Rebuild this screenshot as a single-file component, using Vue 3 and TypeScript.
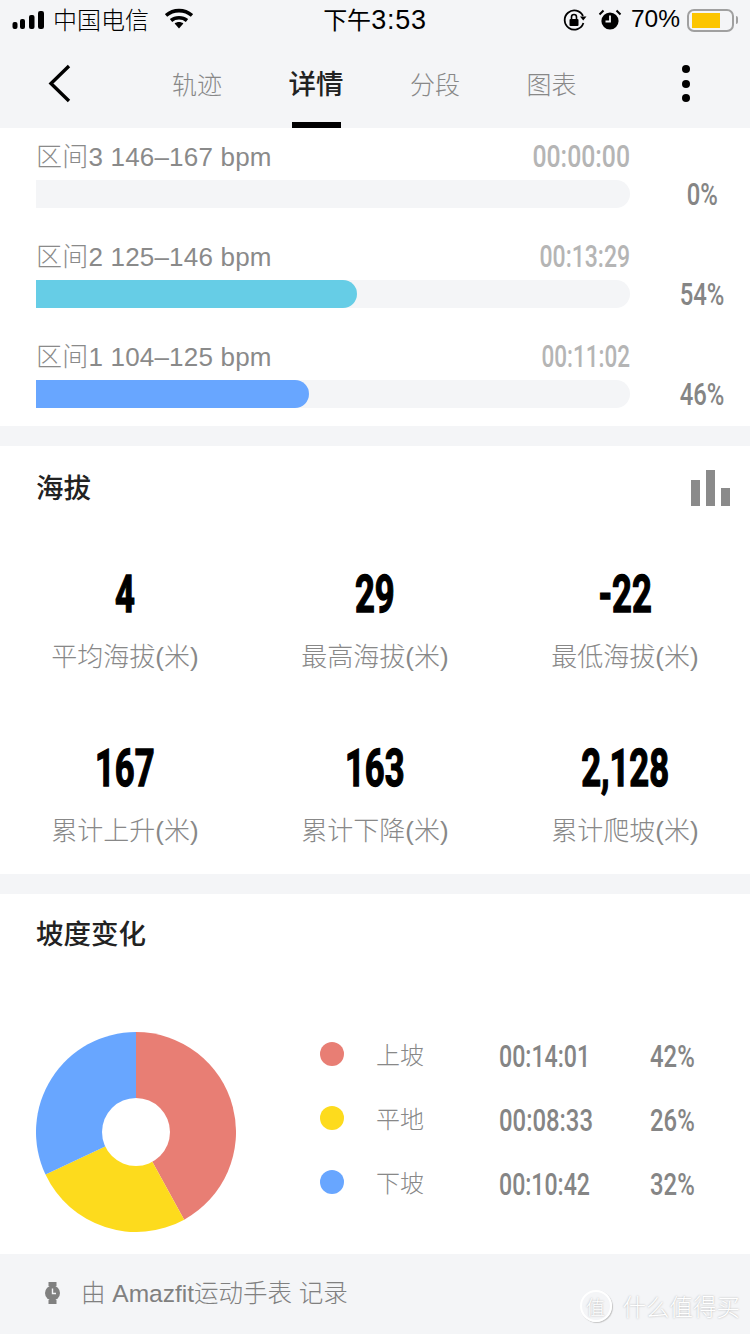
<script setup lang="ts">
const tabs = [
  { name: '轨迹', active: false },
  { name: '详情', active: true },
  { name: '分段', active: false },
  { name: '图表', active: false },
]
const zones = [
  { label: '区间3 146–167 bpm', time: '00:00:00', pct: 0, color: 'transparent', scale: 0.8 },
  { label: '区间2 125–146 bpm', time: '00:13:29', pct: 54, color: '#66cde6', scale: 0.742 },
  { label: '区间1 104–125 bpm', time: '00:11:02', pct: 46, color: '#68a6ff', scale: 0.726 },
]
const stats = [
  { value: '4', label: '平均海拔(米)' },
  { value: '29', label: '最高海拔(米)' },
  { value: '-22', label: '最低海拔(米)' },
  { value: '167', label: '累计上升(米)' },
  { value: '163', label: '累计下降(米)' },
  { value: '2,128', label: '累计爬坡(米)' },
]
const slopes = [
  { label: '上坡', time: '00:14:01', pct: 42, color: '#e87e74', scale: 0.747 },
  { label: '平地', time: '00:08:33', pct: 26, color: '#fddb1d', scale: 0.77 },
  { label: '下坡', time: '00:10:42', pct: 32, color: '#68a6ff', scale: 0.745 },
]
function slicePath(startPct: number, pct: number): string {
  const a0 = (startPct / 100) * Math.PI * 2
  const a1 = ((startPct + pct) / 100) * Math.PI * 2
  const x0 = 100 + 100 * Math.sin(a0)
  const y0 = 100 - 100 * Math.cos(a0)
  const x1 = 100 + 100 * Math.sin(a1)
  const y1 = 100 - 100 * Math.cos(a1)
  const large = pct > 50 ? 1 : 0
  return `M100 100L${x0.toFixed(2)} ${y0.toFixed(2)}A100 100 0 ${large} 1 ${x1.toFixed(2)} ${y1.toFixed(2)}Z`
}
let acc = 0
const slices = slopes.map((s) => {
  const d = slicePath(acc, s.pct)
  acc += s.pct
  return { d, color: s.color }
})
</script>

<template>
  <div class="page">
    <header class="top">
      <div class="status">
        <div class="status-left">
          <svg class="signal" width="34" height="20" viewBox="0 0 34 20">
            <rect x="0.5" y="12" width="5" height="7" rx="2" />
            <rect x="8" y="9" width="5" height="10" rx="2" />
            <rect x="17" y="5" width="5.5" height="14" rx="2" />
            <rect x="26" y="1" width="6" height="18" rx="2.2" />
          </svg>
          <span class="carrier">中国电信</span>
          <svg class="wifi" width="28" height="22" viewBox="0 0 28 22">
            <path d="M1 7.5C8.5 1 19.5 1 27 7.5" fill="none" stroke="#000" stroke-width="3.6" />
            <path d="M6 12.5C10.5 8.8 17.5 8.8 22 12.5" fill="none" stroke="#000" stroke-width="3.6" />
            <path d="M9.6 15.6C12 13.6 16 13.6 18.4 15.6L14 20.5Z" fill="#000" />
          </svg>
        </div>
        <div class="clock">下午<span class="clock-time">3:53</span></div>
        <div class="status-right">
          <svg width="26" height="24" viewBox="0 0 26 24">
            <path d="M21 8A9.6 9.6 0 1 0 21.4 15" fill="none" stroke="#000" stroke-width="1.8" />
            <path d="M18 8.5H24.5L21.2 12.5Z" fill="#000" />
            <rect x="7.5" y="11" width="9" height="7" rx="1" fill="#000" />
            <path d="M9.5 11V9A2.5 2.5 0 0 1 14.5 9V11" fill="none" stroke="#000" stroke-width="1.6" />
          </svg>
          <svg class="alarm" width="24" height="24" viewBox="0 0 24 24">
            <circle cx="12" cy="13" r="8.6" fill="#000" />
            <path d="M12 7.5V13.5H7.5" fill="none" stroke="#f4f5f7" stroke-width="1.8" />
            <path d="M1.5 6.5L5.5 2.5M22.5 6.5L18.5 2.5" stroke="#000" stroke-width="2" />
          </svg>
          <span class="battery-pct">70%</span>
          <div class="battery"><div class="battery-fill"></div></div>
          <div class="battery-tip"></div>
        </div>
      </div>
      <nav class="nav">
        <div class="nav-back">
          <svg width="28" height="40" viewBox="0 0 28 40">
            <path d="M22 3L4 20.5L22 38" fill="none" stroke="#000" stroke-width="3.4" />
          </svg>
        </div>
        <div class="tabs">
          <div v-for="t in tabs" :key="t.name" class="tab" :class="{ active: t.active }">{{ t.name }}</div>
        </div>
        <div class="more"><i></i><i></i><i></i></div>
      </nav>
    </header>

    <section class="card zones">
      <div v-for="z in zones" :key="z.label" class="zone">
        <div class="zone-head">
          <span class="zone-label">{{ z.label }}</span>
          <span class="zone-time cond" :style="{ transform: `scaleX(${z.scale})` }">{{ z.time }}</span>
        </div>
        <div class="zone-line">
          <div class="track">
            <div class="fill" :style="{ width: z.pct + '%', background: z.color }"></div>
          </div>
          <div class="zone-pct"><span class="cond">{{ z.pct }}%</span></div>
        </div>
      </div>
    </section>

    <section class="card alt">
      <div class="card-head">
        <h2>海拔</h2>
        <svg class="bars" width="40" height="36" viewBox="0 0 40 36">
          <rect x="0" y="10" width="9" height="26" />
          <rect x="15" y="0" width="9" height="36" />
          <rect x="30" y="18" width="9" height="18" />
        </svg>
      </div>
      <div class="stats">
        <div v-for="s in stats" :key="s.label" class="stat">
          <div class="stat-value"><span class="cond">{{ s.value }}</span></div>
          <div class="stat-label">{{ s.label }}</div>
        </div>
      </div>
    </section>

    <section class="card slope">
      <div class="card-head slope-head"><h2>坡度变化</h2></div>
      <div class="chart">
        <svg class="pie" width="200" height="200" viewBox="0 0 200 200">
          <path v-for="p in slices" :key="p.color" :d="p.d" :fill="p.color" />
          <circle cx="100" cy="100" r="34" fill="#fff" />
        </svg>
        <div class="legend">
          <div v-for="s in slopes" :key="s.label" class="legend-row">
            <span class="dot" :style="{ background: s.color }"></span>
            <span class="legend-label">{{ s.label }}</span>
            <span class="legend-time"><span class="cond" :style="{ transform: `scaleX(${s.scale})` }">{{ s.time }}</span></span>
            <span class="legend-pct"><span class="cond">{{ s.pct }}%</span></span>
          </div>
        </div>
      </div>
    </section>

    <footer class="foot">
      <svg width="17" height="22" viewBox="0 0 16 22">
        <rect x="4" y="0" width="8" height="4" fill="#808080" />
        <rect x="4" y="18" width="8" height="4" fill="#808080" />
        <circle cx="8" cy="11" r="7.5" fill="#808080" />
        <path d="M8 6.5V11.5H11.5" fill="none" stroke="#f4f5f7" stroke-width="1.4" />
      </svg>
      <span class="foot-text">由 Amazfit运动手表 记录</span>
      <div class="mark">
        <span class="mark-ring">值</span>
        <span class="mark-text">什么值得买</span>
      </div>
    </footer>
  </div>
</template>

<style>
html, body { margin: 0; padding: 0; background: #fff; }
</style>

<style scoped>
.page {
  position: relative;
  width: 750px;
  height: 1334px;
  overflow: hidden;
  background: #f4f5f7;
  font-family: "Liberation Sans", "Noto Sans CJK SC", sans-serif;
}
.cond {
  display: inline-block;
  font-family: Roboto, "Liberation Sans", sans-serif;
  font-weight: 700;
}
.top { height: 128px; }
.status {
  height: 40px;
  display: grid;
  grid-template-columns: 1fr auto 1fr;
  align-items: center;
  color: #000;
  font-size: 24px;
}
.status-left { display: flex; align-items: center; padding-left: 12px; }
.signal { fill: #000; margin-right: 7px; }
.carrier { font-weight: 300; margin-top: -4px; }
.wifi { margin-left: 16px; margin-bottom: 2px; }
.clock { margin-top: -3px; }
.clock-time { font-size: 27px; letter-spacing: 0.8px; }
.status-right { display: flex; align-items: center; padding-left: 135px; }
.alarm { margin-left: 10px; }
.battery-pct { margin-left: 9px; margin-top: -3px; font-size: 24.5px; }
.battery {
  margin-left: 7px;
  width: 47px;
  height: 23px;
  box-sizing: border-box;
  border: 2px solid #a0a0a0;
  border-radius: 7px;
  padding: 2px;
}
.battery-fill { width: 28px; height: 15px; background: #fcc500; margin-left: 1px; }
.battery-tip { width: 2px; height: 8px; background: #a0a0a0; border-radius: 0 2px 2px 0; margin-left: 2px; }
.nav { height: 88px; display: flex; position: relative; }
.nav-back { width: 172px; box-sizing: border-box; padding: 23px 0 0 47px; }
.tabs { display: flex; gap: 66.5px; }
.tab {
  height: 88px;
  box-sizing: border-box;
  padding-top: 27px;
  font-size: 25px;
  line-height: 36px;
  color: #888;
  font-weight: 300;
  position: relative;
}
.tab.active { font-size: 27.5px; color: #222; font-weight: 500; }
.tab.active::after {
  content: "";
  position: absolute;
  left: 3px;
  right: 3px;
  bottom: 0;
  height: 6px;
  background: #000;
}
.more {
  margin-left: auto;
  margin-right: 60px;
  padding-top: 25px;
  display: flex;
  flex-direction: column;
  gap: 6.5px;
}
.more i { display: block; width: 8px; height: 8px; border-radius: 50%; background: #000; }

.card { background: #fff; }
.zones { padding: 15px 0 18px 36px; margin-bottom: 20px; }
.zone + .zone { margin-top: 35px; }
.zone-head {
  width: 594px;
  height: 28px;
  margin-bottom: 9px;
  display: flex;
  justify-content: space-between;
  align-items: center;
}
.zone-label { font-size: 26px; color: #8a8a8a; font-weight: 300; margin-bottom: 6px; letter-spacing: 0.2px; }
.zone-time { font-size: 31px; font-weight: 500; color: #b5b5b5; transform-origin: right center; margin-bottom: 2px; }
.zone-line { display: flex; align-items: center; height: 28px; }
.track { width: 594px; height: 28px; background: #f4f5f7; border-radius: 0 14px 14px 0; overflow: hidden; }
.fill { height: 100%; border-radius: 0 14px 14px 0; }
.zone-pct { width: 60px; margin-left: 42px; text-align: center; font-size: 31px; color: #858585; }
.zone-pct .cond { font-weight: 500; transform: scaleX(0.77); }

.alt { height: 428px; margin-bottom: 20px; }
.card-head { height: 84px; display: flex; align-items: center; justify-content: space-between; padding: 0 19px 0 36px; }
.card-head h2 { margin: 0 0 4px; font-size: 27.5px; font-weight: 500; color: #222; }
.bars { fill: #8a8a8a; }
.stats { display: grid; grid-template-columns: repeat(3, 250px); row-gap: 50px; padding-top: 16px; }
.stat { text-align: center; }
.stat-value { height: 96px; line-height: 96px; font-size: 52px; color: #000; }
.stat-value .cond { transform: scaleX(0.665); -webkit-text-stroke: 1.4px #000; }
.stat-label { height: 28px; line-height: 30px; font-size: 26px; font-weight: 300; color: #888; }

.slope { height: 360px; }
.slope-head { height: 80px; }
.chart { display: flex; padding: 50px 0 0 36px; }
.pie { margin-top: 8px; margin-right: 84px; flex: none; }
.legend-row {
  height: 64px;
  display: grid;
  grid-template-columns: 56px 123px 151px auto;
  align-items: center;
}
.dot { width: 24px; height: 24px; border-radius: 50%; margin-top: -4px; }
.legend-label { font-size: 24px; font-weight: 300; color: #888; margin-bottom: 6px; }
.legend-time, .legend-pct { font-size: 31px; color: #858585; }
.legend-time .cond { font-weight: 500; transform-origin: left center; }
.legend-pct .cond { font-weight: 500; transform: scaleX(0.77); transform-origin: left center; }

.foot {
  position: relative;
  height: 80px;
  display: flex;
  align-items: center;
  padding: 0 0 2px 44px;
  box-sizing: border-box;
  font-size: 24.5px;
  font-weight: 300;
  color: #808080;
}
.foot-text { margin-left: 20px; margin-bottom: 4px; }
.mark {
  position: absolute;
  right: 10px;
  bottom: 11px;
  display: flex;
  align-items: center;
  gap: 11px;
  color: #fff;
  text-shadow: 0 0 2px #a8a8a8;
}
.mark-ring {
  flex: none;
  width: 28px;
  height: 28px;
  border: 2px solid #fff;
  box-shadow: 1px 1px 1px #c4c4c4;
  border-radius: 50%;
  display: flex;
  align-items: center;
  justify-content: center;
  font-size: 19px;
}
.mark-text { font-size: 23.5px; }
</style>
